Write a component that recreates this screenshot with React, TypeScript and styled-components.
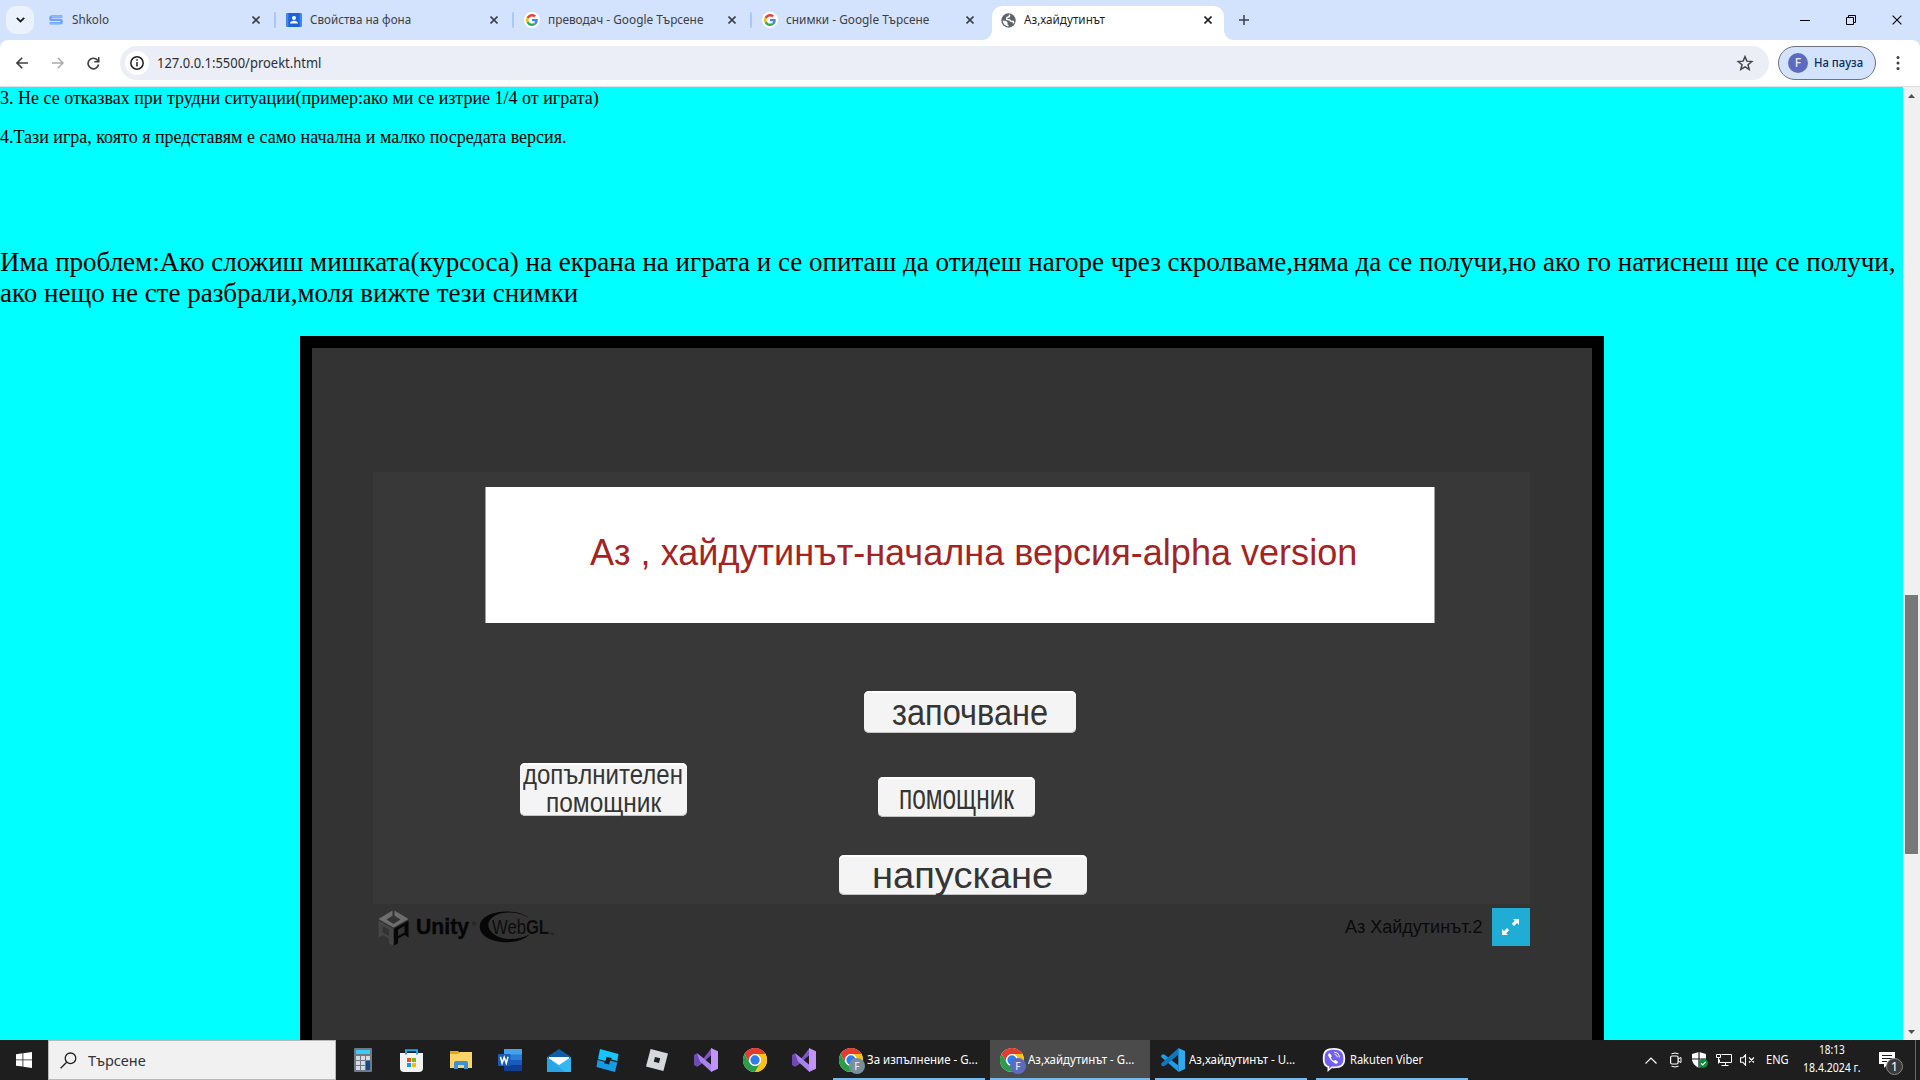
import React, { useLayoutEffect, useRef, useState } from "react";
import styled, { createGlobalStyle, css } from "styled-components";

const Global = createGlobalStyle`
  * { box-sizing: border-box; }
  body { margin: 0; overflow: hidden; background: #1f1f1f; }
  svg { display: block; flex: none; }
  p { margin: 0; }
`;

const ui = `"Noto Sans", "Open Sans", sans-serif`;
const arial = `"Liberation Sans", Arial, sans-serif`;
const times = `"Liberation Serif", "Times New Roman", serif`;

/* ---------- text that is condensed or stretched to a given width ---------- */

const FitBox = styled.span<{ $w: number }>`
  display: block;
  flex: none;
  width: ${(p) => p.$w}px;
  white-space: nowrap;
`;
const FitInner = styled.span`
  display: inline-block;
  transform-origin: 0 50%;
`;

function Fit({ w, children }: { w: number; children: React.ReactNode }) {
  const ref = useRef<HTMLSpanElement>(null);
  const [scale, setScale] = useState(1);
  useLayoutEffect(() => {
    if (ref.current) setScale(w / ref.current.offsetWidth);
  }, [w]);
  return (
    <FitBox $w={w}>
      <FitInner ref={ref} style={{ transform: `scaleX(${scale})` }}>
        {children}
      </FitInner>
    </FitBox>
  );
}

/* ---------- browser chrome ---------- */

const Screen = styled.div`
  width: 1920px;
  height: 1080px;
  display: flex;
  flex-direction: column;
  overflow: hidden;
  font-family: ${ui};
`;

const TabStrip = styled.div`
  height: 40px;
  flex: none;
  display: flex;
  background: #d3e3fd;
`;

const TabSearch = styled.div`
  width: 28px;
  height: 28px;
  margin: 6px 3px 6px 6px;
  border-radius: 10px;
  background: #ebf2fe;
  display: grid;
  place-items: center;
`;

const Tab = styled.div<{ $active?: boolean; $sep?: boolean }>`
  position: relative;
  width: 238px;
  height: 40px;
  padding: 0 15px 0 11px;
  display: flex;
  align-items: center;
  font-size: 12px;
  line-height: 42px;
  color: #3c4043;
  ${(p) =>
    p.$sep &&
    css`
      &::before {
        content: "";
        position: absolute;
        left: -1px;
        top: 12px;
        width: 2px;
        height: 16px;
        border-radius: 1px;
        background: #a8c7fa;
      }
    `}
  ${(p) =>
    p.$active &&
    css`
      width: 232px;
      height: 34px;
      margin: 6px 0 0 3px;
      padding: 0 12px 6px 8px;
      line-height: 30px;
      border-radius: 10px 10px 0 0;
      background: #fff;
      color: #1f1f1f;
      &::before,
      &::after {
        content: "";
        position: absolute;
        bottom: 0;
        width: 10px;
        height: 10px;
      }
      &::before {
        left: -10px;
        background: radial-gradient(circle at 0 0, transparent 9.5px, #fff 10.5px);
      }
      &::after {
        right: -10px;
        background: radial-gradient(circle at 100% 0, transparent 9.5px, #fff 10.5px);
      }
    `}
`;
const Favicon = styled.span`
  width: 16px;
  margin-right: 8px;
  display: flex;
  justify-content: center;
`;
const TabClose = styled.span`
  margin-left: auto;
`;
const NewTab = styled.div`
  width: 40px;
  display: grid;
  place-items: center;
`;
const WindowButtons = styled.div`
  margin-left: auto;
  display: flex;
`;
const WindowButton = styled.div`
  width: 46px;
  height: 40px;
  display: grid;
  place-items: center;
`;

const Toolbar = styled.div`
  height: 47px;
  flex: none;
  padding-left: 4px;
  display: flex;
  align-items: center;
  background: #fff;
  border-bottom: 1px solid #dcdfe3;
  border-radius: 8px 8px 0 0;
`;
const ToolbarBack = styled.div`
  background: #d3e3fd;
`;
const NavButton = styled.div<{ $w?: number }>`
  width: ${(p) => p.$w ?? 36}px;
  height: 34px;
  display: grid;
  place-items: center;
`;
const Omnibox = styled.div`
  width: 1649px;
  height: 34px;
  margin-left: 10px;
  padding: 0 15px 0 5px;
  display: flex;
  align-items: center;
  border-radius: 17px;
  background: #ebeef7;
  font-size: 14px;
  line-height: 34px;
  color: #2c2f33;
`;
const SiteInfo = styled.div`
  width: 24px;
  height: 24px;
  margin-right: 8px;
  border-radius: 50%;
  background: #fff;
  display: grid;
  place-items: center;
`;
const StarSlot = styled.span`
  margin-left: auto;
`;
const Profile = styled.div`
  width: 98px;
  height: 34px;
  margin-left: 9px;
  padding-left: 9px;
  display: flex;
  align-items: center;
  gap: 6px;
  border: 1px solid #6f747c;
  border-radius: 17px;
  background: #d3e3fd;
  font-size: 12px;
  font-weight: 500;
  line-height: 32px;
  color: #0a2a5c;
`;
const Avatar = styled.span<{ $size: number; $bg: string }>`
  width: ${(p) => p.$size}px;
  height: ${(p) => p.$size}px;
  flex: none;
  border-radius: 50%;
  background: ${(p) => p.$bg};
  color: #e8eaf6;
  font: 500 ${(p) => Math.round(p.$size * 0.6)}px/1 ${ui};
  display: grid;
  place-items: center;
`;
const MenuSlot = styled.div`
  width: 44px;
  display: grid;
  place-items: center;
`;

/* ---------- web page ---------- */

const Viewport = styled.div`
  height: 953px;
  flex: none;
  display: flex;
  overflow: hidden;
`;
const Page = styled.main`
  width: 1903px;
  height: 953px;
  padding-top: 1px;
  overflow: hidden;
  background: #00ffff;
  color: #000;
  font-family: ${times};
`;
const Note = styled.p`
  font-size: 18px;
  line-height: 21px;
  margin-bottom: 18px;
`;
const Problem = styled.p`
  margin-top: 99px;
  font-size: 27px;
  line-height: 31px;
`;
const Frame = styled.section`
  width: 1304px;
  height: 900px;
  margin: 27px 0 0 300px;
  padding: 124px 62px 0 61px;
  border: 12px solid #000;
  background: #333;
  font-family: ${arial};
`;
const GameCanvas = styled.div`
  width: 1157px;
  height: 432px;
  background: #383838;
`;
const Spacer = styled.div`
  height: 15px;
`;
const Banner = styled.div`
  width: 950px;
  height: 136px;
  margin-left: 112px;
  padding-left: 104px;
  background: #fff;
  border: solid #a0a0a0;
  border-width: 0 1px;
  font-size: 37px;
  line-height: 132px;
  color: #a52323;
`;
const Menu = styled.div`
  display: flex;
`;
const MenuColumn = styled.div`
  display: flex;
  flex-direction: column;
`;
const GameButton = styled.div<{
  $w: number;
  $h: number;
  $top: number;
  $left: number;
  $font: number;
  $line: number;
  $drop?: number;
}>`
  width: ${(p) => p.$w}px;
  height: ${(p) => p.$h}px;
  margin: ${(p) => p.$top}px 0 0 ${(p) => p.$left}px;
  padding-top: ${(p) => p.$drop ?? 0}px;
  display: flex;
  flex-direction: column;
  align-items: center;
  justify-content: center;
  flex: none;
  border-radius: 5px;
  background: #f4f4f4;
  box-shadow: inset 0 2px 0 #fff, inset 0 -1px 0 #c4c4c4;
  color: #353535;
  font-size: ${(p) => p.$font}px;
  line-height: ${(p) => p.$line}px;
`;
const GameFooter = styled.div`
  height: 46px;
  padding-top: 4px;
  display: flex;
  align-items: flex-start;
`;
const BuildTitle = styled.div`
  margin: 0 9px 0 auto;
  font-size: 18px;
  line-height: 38px;
  color: #0a0a0a;
`;
const Fullscreen = styled.div`
  width: 38px;
  height: 38px;
  background: #1fadd6;
  display: grid;
  place-items: center;
`;
const Logos = styled.div`
  height: 38px;
  padding-left: 5px;
  display: flex;
`;

const Scrollbar = styled.div`
  width: 17px;
  height: 953px;
  padding: 0 2px;
  display: flex;
  flex-direction: column;
  background: #f0f0f0;
`;
const ScrollArrow = styled.div`
  height: 17px;
  display: grid;
  place-items: center;
`;
const Thumb = styled.div`
  width: 13px;
  height: 259px;
  margin: 491px 0 auto;
  background: #787878;
`;

/* ---------- taskbar ---------- */

const Taskbar = styled.footer`
  height: 40px;
  flex: none;
  display: flex;
  background: #1e1e1e;
  color: #fff;
  font-size: 12px;
`;
const Start = styled.div`
  width: 48px;
  display: grid;
  place-items: center;
`;
const Search = styled.div`
  width: 288px;
  height: 40px;
  padding-left: 11px;
  display: flex;
  align-items: center;
  gap: 11px;
  border: 1px solid #b9b9b9;
  background: #f1f1f1;
  color: #333;
  font-size: 15px;
  line-height: 38px;
`;
const Pinned = styled.div`
  display: flex;
  margin: 0 5px 0 2px;
`;
const PinnedIcon = styled.div`
  width: 49px;
  height: 40px;
  display: grid;
  place-items: center;
`;
const Task = styled.div<{ $w: number; $ml: number; $pl: number; $active?: boolean }>`
  width: ${(p) => p.$w}px;
  height: 40px;
  margin-left: ${(p) => p.$ml}px;
  padding-left: ${(p) => p.$pl}px;
  display: flex;
  align-items: center;
  gap: 4px;
  line-height: 38px;
  background: ${(p) => (p.$active ? "#4b4b4b" : "transparent")};
  box-shadow: inset 0 -2px 0 #76b9ed;
`;
const BadgedIcon = styled.span`
  position: relative;
`;
const IconBadge = styled.span`
  position: absolute;
  left: 10px;
  top: 10px;
`;
const Tray = styled.div`
  margin-left: auto;
  display: flex;
  align-items: center;
`;
const Slot = styled.div<{ $w: number; $pl?: number }>`
  width: ${(p) => p.$w}px;
  padding-left: ${(p) => p.$pl ?? 0}px;
  display: flex;
  justify-content: center;
  line-height: 40px;
`;
const Clock = styled.div`
  width: 84px;
  height: 38px;
  display: flex;
  flex-direction: column;
  align-items: center;
  line-height: 18px;
`;
const Notifications = styled.div`
  position: relative;
  width: 41px;
  height: 40px;
  padding: 12px 0 0 5px;
`;
const Count = styled.span`
  position: absolute;
  left: 12px;
  top: 18px;
  width: 17px;
  height: 17px;
  border: 1px solid #8a8a8a;
  border-radius: 50%;
  background: #3a3a3a;
  font-size: 13px;
  line-height: 15px;
  text-align: center;
`;
const ShowDesktop = styled.div`
  width: 5px;
  height: 40px;
  border-left: 1px solid #6a6a6a;
`;

/* ---------- icons ---------- */

const Cross = ({ s = 8, w = 1.6, c = "#3c4043" }) => (
  <svg width={s} height={s} viewBox="0 0 8 8">
    <path d="M.5.5l7 7M7.5.5l-7 7" stroke={c} strokeWidth={w} fill="none" />
  </svg>
);

const GoogleG = () => (
  <svg width="16" height="16" viewBox="0 0 16 16">
    <circle cx="8" cy="8" r="8" fill="#fff" />
    <g transform="translate(2 2) scale(.25)">
      <path fill="#EA4335" d="M24 9.5c3.54 0 6.71 1.22 9.21 3.6l6.85-6.85C35.9 2.38 30.47 0 24 0 14.62 0 6.51 5.38 2.56 13.22l7.98 6.19C12.43 13.72 17.74 9.5 24 9.5z" />
      <path fill="#4285F4" d="M46.98 24.55c0-1.57-.15-3.09-.38-4.55H24v9.02h12.94c-.58 2.96-2.26 5.48-4.78 7.18l7.73 6c4.51-4.18 7.09-10.36 7.09-17.65z" />
      <path fill="#FBBC05" d="M10.53 28.59A14.5 14.5 0 0 1 9.77 24c0-1.6.27-3.14.76-4.59l-7.98-6.19A23.9 23.9 0 0 0 0 24c0 3.88.92 7.54 2.56 10.78l7.97-6.19z" />
      <path fill="#34A853" d="M24 48c6.48 0 11.93-2.13 15.89-5.81l-7.73-6c-2.15 1.45-4.92 2.3-8.16 2.3-6.26 0-11.57-4.22-13.47-9.91l-7.98 6.19C6.51 42.62 14.62 48 24 48z" />
    </g>
  </svg>
);

const ShkoloIcon = () => (
  <svg width="14" height="10" viewBox="0 0 14 10">
    <path d="M13.4 1.5H3a1.7 1.7 0 0 0 0 3.4h8a1.7 1.7 0 0 1 0 3.4H.6" fill="none" stroke="#6ea2fb" strokeWidth="2.4" />
    <path d="M13.4 1.5H3M11 8.3H.6" stroke="#a9c9ff" strokeWidth=".6" />
  </svg>
);

const ContactIcon = () => (
  <svg width="16" height="16" viewBox="0 0 16 16">
    <rect y="1" width="16" height="14" rx="1" fill="#4285f4" />
    <rect x="2.4" y="1" width="11.2" height="14" fill="#1a63d8" />
    <circle cx="8" cy="6" r="2" fill="#fff" />
    <path d="M4 11.6c0-2 2-2.8 4-2.8s4 .8 4 2.8z" fill="#fff" />
  </svg>
);

const GlobeIcon = () => (
  <svg width="15" height="15" viewBox="0 0 15 15">
    <circle cx="7.500" cy="7.500" r="7.200" fill="#5f6368" />
    <path d="M8.600 1.700l-.3 2-2.400.8-.2 1.900 2.600.3 1.700 1.500 2.300.2.300 1.900" fill="none" stroke="#fff" strokeWidth="1.500" />
    <path d="M1.700 7.600l3.600.5 1.500 1.700-.6 1.500 1.300.6v1.500C4.400 13.300 1.900 11 1.700 7.600z" fill="#fff" />
  </svg>
);

const ChromeIcon = () => (
  <svg width="24" height="24" viewBox="0 0 48 48">
    <circle cx="24" cy="24" r="24" fill="#fff" />
    <path d="M24 12h20.800A24 24 0 0 0 3.200 12l10.400 18A12 12 0 0 1 24 12z" fill="#e33b2e" />
    <path d="M34.400 30L24 48A24 24 0 0 0 44.800 12H24a12 12 0 0 1 10.400 18z" fill="#fbc116" />
    <path d="M13.600 30L3.200 12A24 24 0 0 0 24 48l10.400-18a12 12 0 0 1-20.800 0z" fill="#2a9d48" />
    <circle cx="24" cy="24" r="11.500" fill="#fff" />
    <circle cx="24" cy="24" r="9.300" fill="#2f7de9" />
  </svg>
);

const VisualStudioIcon = () => (
  <svg width="24" height="24" viewBox="0 0 24 24">
    <path d="M0 7l3-1.700 3 2.200v9L3 18.700 0 17z" fill="#6d4bb0" />
    <path d="M3 18.700L17.500 0v7L6.500 16.500z" fill="#7d55c7" />
    <path d="M3 5.300L8 9l9.500 8v7L6 13.500z" fill="#a982ee" />
    <path d="M17 0l7 3.300v17.400L17 24z" fill="#c193fb" />
  </svg>
);

const CalculatorIcon = () => (
  <svg width="18" height="24" viewBox="0 0 18 24">
    <rect width="18" height="24" rx="1" fill="#6f7a86" />
    <rect x="2" y="2" width="14" height="4" fill="#3ccbf4" />
    <path d="M2 8h4v4H2zM7 8h4v4H7zM12 8h4v4h-4zM2 13h4v4H2zM7 13h4v4H7zM2 18h4v4H2zM7 18h4v4H7z" fill="#d5dbe1" />
    <path d="M12 13h4v9h-4z" fill="#0f4a8c" />
  </svg>
);

const StoreIcon = () => (
  <svg width="23" height="23" viewBox="0 0 23 23">
    <path d="M0 4h23v15a4 4 0 0 1-4 4H4a4 4 0 0 1-4-4z" fill="#f3f3f3" />
    <path d="M6 5.500V1.200h11v4.300" fill="none" stroke="#22a8ea" strokeWidth="2" />
    <path d="M7 9h4v4H7z" fill="#f25022" />
    <path d="M12 9h4v4h-4z" fill="#7fba00" />
    <path d="M7 14h4v4H7z" fill="#00a4ef" />
    <path d="M12 14h4v4h-4z" fill="#ffb900" />
  </svg>
);

const FolderIcon = () => (
  <svg width="22" height="18" viewBox="0 0 22 18">
    <path d="M0 0h8l2 2h12v15H0z" fill="#e8a413" />
    <path d="M0 3h8l2-2h12v16H0z" fill="#fdd466" />
    <path d="M4 18v-6a2 2 0 0 1 2-2h10a2 2 0 0 1 2 2v6h-4v-4H8v4z" fill="#3c91d8" />
  </svg>
);

const WordIcon = () => (
  <svg width="24" height="22" viewBox="0 0 24 22">
    <path d="M6 0h18v6H6z" fill="#41a5ee" />
    <path d="M6 5.500h18V11H6z" fill="#2b7cd3" />
    <path d="M6 11h18v5.500H6z" fill="#185abd" />
    <path d="M6 16.500h18V22H6z" fill="#103f91" />
    <rect y="5" width="12.500" height="12" rx="1" fill="#185abd" />
    <path d="M2.400 7.800l1.700 6.400 2.100-6 2.100 6L10 7.800" fill="none" stroke="#fff" strokeWidth="1.500" />
  </svg>
);

const MailIcon = () => (
  <svg width="24" height="23" viewBox="0 0 24 23">
    <path d="M0 8l12-8 12 8v4H0z" fill="#0f5ea8" />
    <path d="M2 8h20v6l-10 4L2 14z" fill="#fff" />
    <path d="M0 8l12 8 12-8v15H0z" fill="#35b8f1" />
    <path d="M0 8l18 15H0z" fill="#1f95dd" opacity=".55" />
  </svg>
);

const RobloxStudioIcon = () => (
  <svg width="23" height="23" viewBox="0 0 23 23">
    <path d="M4 0l18.500 5-1.200 7-6-1.500.3-1.500-5-1.300L9.500 12 2 10z" fill="#15c5fb" />
    <path d="M1.500 11l7 1.800-.4 1.500 5 1.300 1-4 7.200 1.900L19 23 .5 18z" fill="#169ce6" />
  </svg>
);

const RobloxIcon = () => (
  <svg width="22" height="22" viewBox="0 0 22 22">
    <path d="M4.600 0L22 4.600 17.400 22 0 17.400zM9 8l-1.200 4.800L13 14l1.200-4.800z" fill="#d5d9de" fillRule="evenodd" />
  </svg>
);

const VsCodeIcon = () => (
  <svg width="24" height="24" viewBox="0 0 24 24">
    <path d="M1.600 6.200L.2 7.400v1.500L17.300 23.800V17.500L3.400 6.400z" fill="#1f9ce8" />
    <path d="M17.300.2L.2 15.500V17l1.400 1.200 1.700.1 14-11.600z" fill="#0b78c2" />
    <path d="M17.300 0L24 3v18l-6.700 3z" fill="#2ea9f3" />
  </svg>
);

const ViberIcon = () => (
  <svg width="24" height="24" viewBox="0 0 24 24">
    <path d="M12 0C4 0 .8 2.800.8 10.500c0 5 1.300 7.700 4.700 9V24l4.300-3.800H12c8 0 11.200-2.800 11.200-9.700S20 0 12 0z" fill="#f7f5ff" />
    <path d="M12 1.800c-7 0-9.400 2.200-9.400 8.700 0 4.600 1.200 6.700 4.600 7.700v2.500l2.300-2.200H12c7 0 9.400-2.200 9.400-8S19 1.800 12 1.800z" fill="#7360f2" />
    <path d="M7.200 5.300c-1 .6-1.300 1.500-.8 2.700 1.400 3.400 3.500 5.800 6.800 7.400 1.300.6 2.200.2 2.800-.9.300-.6-.2-1-2.300-2.300-.7-.4-1 .8-1.700.6-1.500-.5-2.500-1.500-3.100-3.100-.2-.7 1.100-.9.700-1.700C8.600 5.800 7.900 5 7.200 5.300z" fill="#fff" />
    <path d="M12.300 4.300c3.200.2 5 2 5.100 5.200M12.600 6.500c1.700.2 2.600 1.100 2.700 2.800" fill="none" stroke="#fff" strokeWidth="1" />
  </svg>
);

const UnityCube = () => (
  <svg width="31" height="38" viewBox="0 0 31 38">
    <path fillRule="evenodd" d="M14.500 2.500L.5 11 15.500 19.500 30.500 11 16.500 2.500v5.300L22.500 11.500 15.500 16 8.500 11.500 14.500 7.800z" fill="#6e6e6e" />
    <path fillRule="evenodd" d="M.5 12.500l14.500 8.300V37.500l-4-2.300v-4.700L4.500 27 .5 29.500zM4.500 18v6.500l6.500 3.500v-6.500z" fill="#454545" />
    <path fillRule="evenodd" d="M30.500 12.500L16 20.800V37.500l4-2.300v-4.700l6.500-3.500 4 2.500zM26.500 18v6.500L20 28v-6.500z" fill="#070707" />
  </svg>
);

const UnityName = styled.div`
  margin-left: 7px;
  font-size: 22px;
  font-weight: 700;
  line-height: 37px;
  color: #060606;
  -webkit-text-stroke: 0.4px #060606;
`;
const Trademark = styled.div`
  margin: 12px 0 0 3px;
  width: 6px;
  height: 8px;
  font-size: 6px;
  line-height: 8px;
  color: #111;
`;
const WebGl = styled.div`
  position: relative;
  width: 76px;
  height: 38px;
  margin-left: 1px;
`;
const WebGlName = styled.div`
  position: absolute;
  left: 13px;
  top: 0;
  display: flex;
  font-size: 21px;
  line-height: 38px;
  color: #0b0b0b;
  text-shadow: 0 0 1.5px #3a3a3a;
`;
const SmallMark = styled.span`
  width: 5px;
  padding-top: 7px;
  font-size: 5px;
`;

const tasks = [
  { name: "За изпълнение - G...", w: 111, ml: 0, kind: "chrome", badge: "#78909c" },
  { name: "Аз,хайдутинът - G...", w: 106, ml: 5, kind: "chrome", badge: "#5c6bc0", active: true },
  { name: "Аз,хайдутинът - U...", w: 106, ml: 5, kind: "code" },
  { name: "Rakuten Viber", w: 73, ml: 9, kind: "viber" },
];

const tabs = [
  { title: "Shkolo", w: 37, icon: <ShkoloIcon /> },
  { title: "Свойства на фона", w: 101, icon: <ContactIcon /> },
  { title: "преводач - Google Търсене", w: 155, icon: <GoogleG /> },
  { title: "снимки - Google Търсене", w: 143, icon: <GoogleG /> },
];

export default function App() {
  return (
    <Screen>
      <Global />
      <TabStrip>
        <TabSearch>
          <svg width="9" height="6" viewBox="0 0 9 6">
            <path d="M.8.8l3.700 3.700L8.200.8" fill="none" stroke="#1f1f1f" strokeWidth="1.800" />
          </svg>
        </TabSearch>
        {tabs.map((t, i) => (
          <Tab key={t.title} $sep={i > 0}>
            <Favicon>{t.icon}</Favicon>
            <Fit w={t.w}>{t.title}</Fit>
            <TabClose>
              <Cross />
            </TabClose>
          </Tab>
        ))}
        <Tab $active>
          <Favicon>
            <GlobeIcon />
          </Favicon>
          <Fit w={81}>Аз,хайдутинът</Fit>
          <TabClose>
            <Cross c="#1f1f1f" />
          </TabClose>
        </Tab>
        <NewTab>
          <svg width="10" height="10" viewBox="0 0 10 10">
            <path d="M5 0v10M0 5h10" stroke="#3c4043" strokeWidth="1.500" />
          </svg>
        </NewTab>
        <WindowButtons>
          <WindowButton>
            <svg width="10" height="10" viewBox="0 0 10 10">
              <path d="M0 5.500h10" stroke="#000" />
            </svg>
          </WindowButton>
          <WindowButton>
            <svg width="10" height="10" viewBox="0 0 10 10">
              <path d="M.5 2.500h7v7h-7zM2.500 2.500v-2h7v7h-2" fill="none" stroke="#000" />
            </svg>
          </WindowButton>
          <WindowButton>
            <Cross s={10} w={0.9} c="#000" />
          </WindowButton>
        </WindowButtons>
      </TabStrip>

      <ToolbarBack>
        <Toolbar>
          <NavButton>
            <svg width="12" height="12" viewBox="0 0 12 12">
              <path d="M12 6H1.200M6.200.8L1 6l5.200 5.200" fill="none" stroke="#3c4043" strokeWidth="1.600" />
            </svg>
          </NavButton>
          <NavButton>
            <svg width="12" height="12" viewBox="0 0 12 12">
              <path d="M0 6h10.800M5.800.8L11 6l-5.200 5.200" fill="none" stroke="#a9abae" strokeWidth="1.500" />
            </svg>
          </NavButton>
          <NavButton $w={34}>
            <svg width="13" height="13" viewBox="0 0 13 13">
              <path d="M11.600 7.500a5.300 5.300 0 1 1-1-4.200L12 4.800" fill="none" stroke="#3c4043" strokeWidth="1.600" />
              <path d="M12.500 0v5.500H7.300V4H11V0z" fill="#3c4043" />
            </svg>
          </NavButton>
          <Omnibox>
            <SiteInfo>
              <svg width="14" height="14" viewBox="0 0 14 14">
                <circle cx="7" cy="7" r="6.200" fill="none" stroke="#1f1f1f" strokeWidth="1.500" />
                <path d="M7 6v4.500M7 3.300v1.500" stroke="#1f1f1f" strokeWidth="1.500" />
              </svg>
            </SiteInfo>
            <Fit w={164}>127.0.0.1:5500/proekt.html</Fit>
            <StarSlot>
              <svg width="18" height="18" viewBox="0 0 24 24">
                <path
                  d="M12 3.500l2.500 6 6.500.5-5 4.200 1.600 6.300L12 17.100l-5.600 3.400L8 14.200 3 10l6.500-.5z"
                  fill="none"
                  stroke="#474747"
                  strokeWidth="2"
                />
              </svg>
            </StarSlot>
          </Omnibox>
          <Profile>
            <Avatar $size={20} $bg="#5c6bc0">
              F
            </Avatar>
            <Fit w={49}>На пауза</Fit>
          </Profile>
          <MenuSlot>
            <svg width="4" height="16" viewBox="0 0 4 16">
              <circle cx="2" cy="2.500" r="1.500" fill="#3c4043" />
              <circle cx="2" cy="8" r="1.500" fill="#3c4043" />
              <circle cx="2" cy="13.500" r="1.500" fill="#3c4043" />
            </svg>
          </MenuSlot>
        </Toolbar>
      </ToolbarBack>

      <Viewport>
        <Page>
          <Note>
            <Fit w={599}>3. Не се отказвах при трудни ситуации(пример:ако ми се изтрие 1/4 от играта)</Fit>
          </Note>
          <Note>
            <Fit w={567}>4.Тази игра, която я представям е само начална и малко посредата версия.</Fit>
          </Note>
          <Problem>
            <Fit w={1896}>
              Има проблем:Ако сложиш мишката(курсоса) на екрана на играта и се опиташ да отидеш нагоре чрез
              скролваме,няма да се получи,но ако го натиснеш ще се получи,
            </Fit>
            <Fit w={578}>ако нещо не сте разбрали,моля вижте тези снимки</Fit>
          </Problem>
          <Frame>
            <GameCanvas>
              <Spacer />
              <Banner>
                <Fit w={767}>Аз , хайдутинът-начална версия-alpha version</Fit>
              </Banner>
              <Menu>
                <GameButton $w={167} $h={53} $top={139.500} $left={146.500} $font={27} $line={27.500} $drop={1.500}>
                  <Fit w={160}>допълнителен</Fit>
                  <Fit w={115}>помощник</Fit>
                </GameButton>
                <MenuColumn>
                  <GameButton $w={212} $h={42} $top={68} $left={177} $font={36.500} $line={42} $drop={1}>
                    <Fit w={156}>започване</Fit>
                  </GameButton>
                  <GameButton $w={157} $h={40} $top={44} $left={191.500} $font={35} $line={40}>
                    <Fit w={115}>помощник</Fit>
                  </GameButton>
                  <GameButton $w={248} $h={40} $top={38} $left={152} $font={37} $line={40} $drop={1}>
                    <Fit w={181}>напускане</Fit>
                  </GameButton>
                </MenuColumn>
              </Menu>
            </GameCanvas>
            <GameFooter>
              <Logos>
                <UnityCube />
                <UnityName>
                  <Fit w={53}>Unity</Fit>
                </UnityName>
                <Trademark>®</Trademark>
                <WebGl>
                  <svg width="76" height="38" viewBox="0 0 76 38">
                    <path
                      d="M50 10C40 1 12 1 3 12c-4.500 6-2 13 4 17 12 8 35 7 44-3-10 6-26 7-35 1-8-5-9-13-2-18 8-6 25-6 36 1z"
                      fill="#070707"
                    />
                  </svg>
                  <WebGlName>
                    <Fit w={57}>
                      Web<b>GL</b>
                    </Fit>
                    <SmallMark>™</SmallMark>
                  </WebGlName>
                </WebGl>
              </Logos>
              <BuildTitle>
                <Fit w={138}>Аз Хайдутинът.2</Fit>
              </BuildTitle>
              <Fullscreen>
                <svg width="18" height="17" viewBox="0 0 18 17">
                  <path d="M11 0h6v6l-2-2-3 3-2.200-2.200 3-3zM0 16v-6l2 2 3-3 2.200 2.200-3 3L6 16z" fill="#fff" />
                </svg>
              </Fullscreen>
            </GameFooter>
          </Frame>
        </Page>
        <Scrollbar>
          <ScrollArrow>
            <svg width="7" height="4" viewBox="0 0 7 4">
              <path d="M0 4L3.500 0 7 4z" fill="#505050" />
            </svg>
          </ScrollArrow>
          <Thumb />
          <ScrollArrow>
            <svg width="7" height="4" viewBox="0 0 7 4">
              <path d="M0 0l3.500 4L7 0z" fill="#505050" />
            </svg>
          </ScrollArrow>
        </Scrollbar>
      </Viewport>

      <Taskbar>
        <Start>
          <svg width="16" height="16" viewBox="0 0 16 16">
            <path d="M0 2.200L6.500 1.300v6.200H0zM7.300 1.200L16 0v7.500H7.300zM0 8.300h6.500v6.300L0 13.700zM7.300 8.300H16V16l-8.700-1.200z" fill="#fff" />
          </svg>
        </Start>
        <Search>
          <svg width="17" height="17" viewBox="0 0 17 17">
            <circle cx="10.500" cy="6.300" r="5.300" fill="none" stroke="#222" strokeWidth="1.300" />
            <path d="M6.700 10.200L.6 16.300" stroke="#222" strokeWidth="1.300" />
          </svg>
          <Fit w={58}>Търсене</Fit>
        </Search>
        <Pinned>
          {[
            <CalculatorIcon />,
            <StoreIcon />,
            <FolderIcon />,
            <WordIcon />,
            <MailIcon />,
            <RobloxStudioIcon />,
            <RobloxIcon />,
            <VisualStudioIcon />,
            <ChromeIcon />,
            <VisualStudioIcon />,
          ].map((icon, i) => (
            <PinnedIcon key={i}>{icon}</PinnedIcon>
          ))}
        </Pinned>
        {tasks.map((t) => (
          <Task key={t.name} $ml={t.ml} $active={t.active} $w={t.active ? 160 : 152} $pl={t.active ? 10 : 6}>
            <BadgedIcon>
              {t.kind === "chrome" ? <ChromeIcon /> : t.kind === "code" ? <VsCodeIcon /> : <ViberIcon />}
              {t.badge && (
                <IconBadge>
                  <Avatar $size={16} $bg={t.badge}>
                    F
                  </Avatar>
                </IconBadge>
              )}
            </BadgedIcon>
            <Fit w={t.w}>{t.name}</Fit>
          </Task>
        ))}
        <Tray>
          <Slot $w={20}>
            <svg width="12" height="7" viewBox="0 0 12 7">
              <path d="M.5 6.500L6 1l5.500 5.500" fill="none" stroke="#fff" strokeWidth="1.200" />
            </svg>
          </Slot>
          <Slot $w={30}>
            <svg width="12" height="16" viewBox="0 0 12 16">
              <rect x=".6" y="4" width="7.500" height="8" rx="1.500" fill="none" stroke="#fff" strokeWidth="1.200" />
              <path d="M8 7l3-1.500v5L8 9M1.500 1.800Q5 .2 8.500 1.800M1.500 14.200q3.500 1.600 7 0" fill="none" stroke="#fff" />
            </svg>
          </Slot>
          <Slot $w={18}>
            <svg width="16" height="16" viewBox="0 0 16 16">
              <path d="M7 0l7 2v5c0 4-3 7-7 9-4-2-7-5-7-9V2z" fill="#fff" />
              <path d="M7 0v16M0 7h14" stroke="#1e1e1e" strokeWidth="1.200" />
              <circle cx="11.300" cy="11.300" r="4.700" fill="#10893e" />
              <path d="M9 11.300l1.700 1.700 3-3.200" fill="none" stroke="#fff" strokeWidth="1.200" />
            </svg>
          </Slot>
          <Slot $w={29}>
            <svg width="16" height="14" viewBox="0 0 16 14">
              <path d="M5.500 1.500h10v8h-12v-3M9.500 9.500v3M5.500 12.500h7M.5 1.500h4v3h-4zM2.500 4.500v6" fill="none" stroke="#fff" />
            </svg>
          </Slot>
          <Slot $w={18}>
            <svg width="15" height="12" viewBox="0 0 15 12">
              <path d="M.5 3.800h2.300L5.500.8v10.400l-2.700-3H.5zM9 3.500l5 5M14 3.500l-5 5" fill="none" stroke="#fff" strokeWidth="1.100" />
            </svg>
          </Slot>
          <Slot $w={34} $pl={8}>
            <Fit w={23}>ENG</Fit>
          </Slot>
          <Clock>
            <Fit w={26}>18:13</Fit>
            <Fit w={58}>18.4.2024 г.</Fit>
          </Clock>
          <Notifications>
            <svg width="16" height="16" viewBox="0 0 16 16">
              <path d="M0 0h16v12h-7l-4 4v-4H0z" fill="#fff" />
              <path d="M3 3.500h10M3 6.500h10M3 9.500h5" stroke="#1e1e1e" />
            </svg>
            <Count>1</Count>
          </Notifications>
          <ShowDesktop />
        </Tray>
      </Taskbar>
    </Screen>
  );
}
